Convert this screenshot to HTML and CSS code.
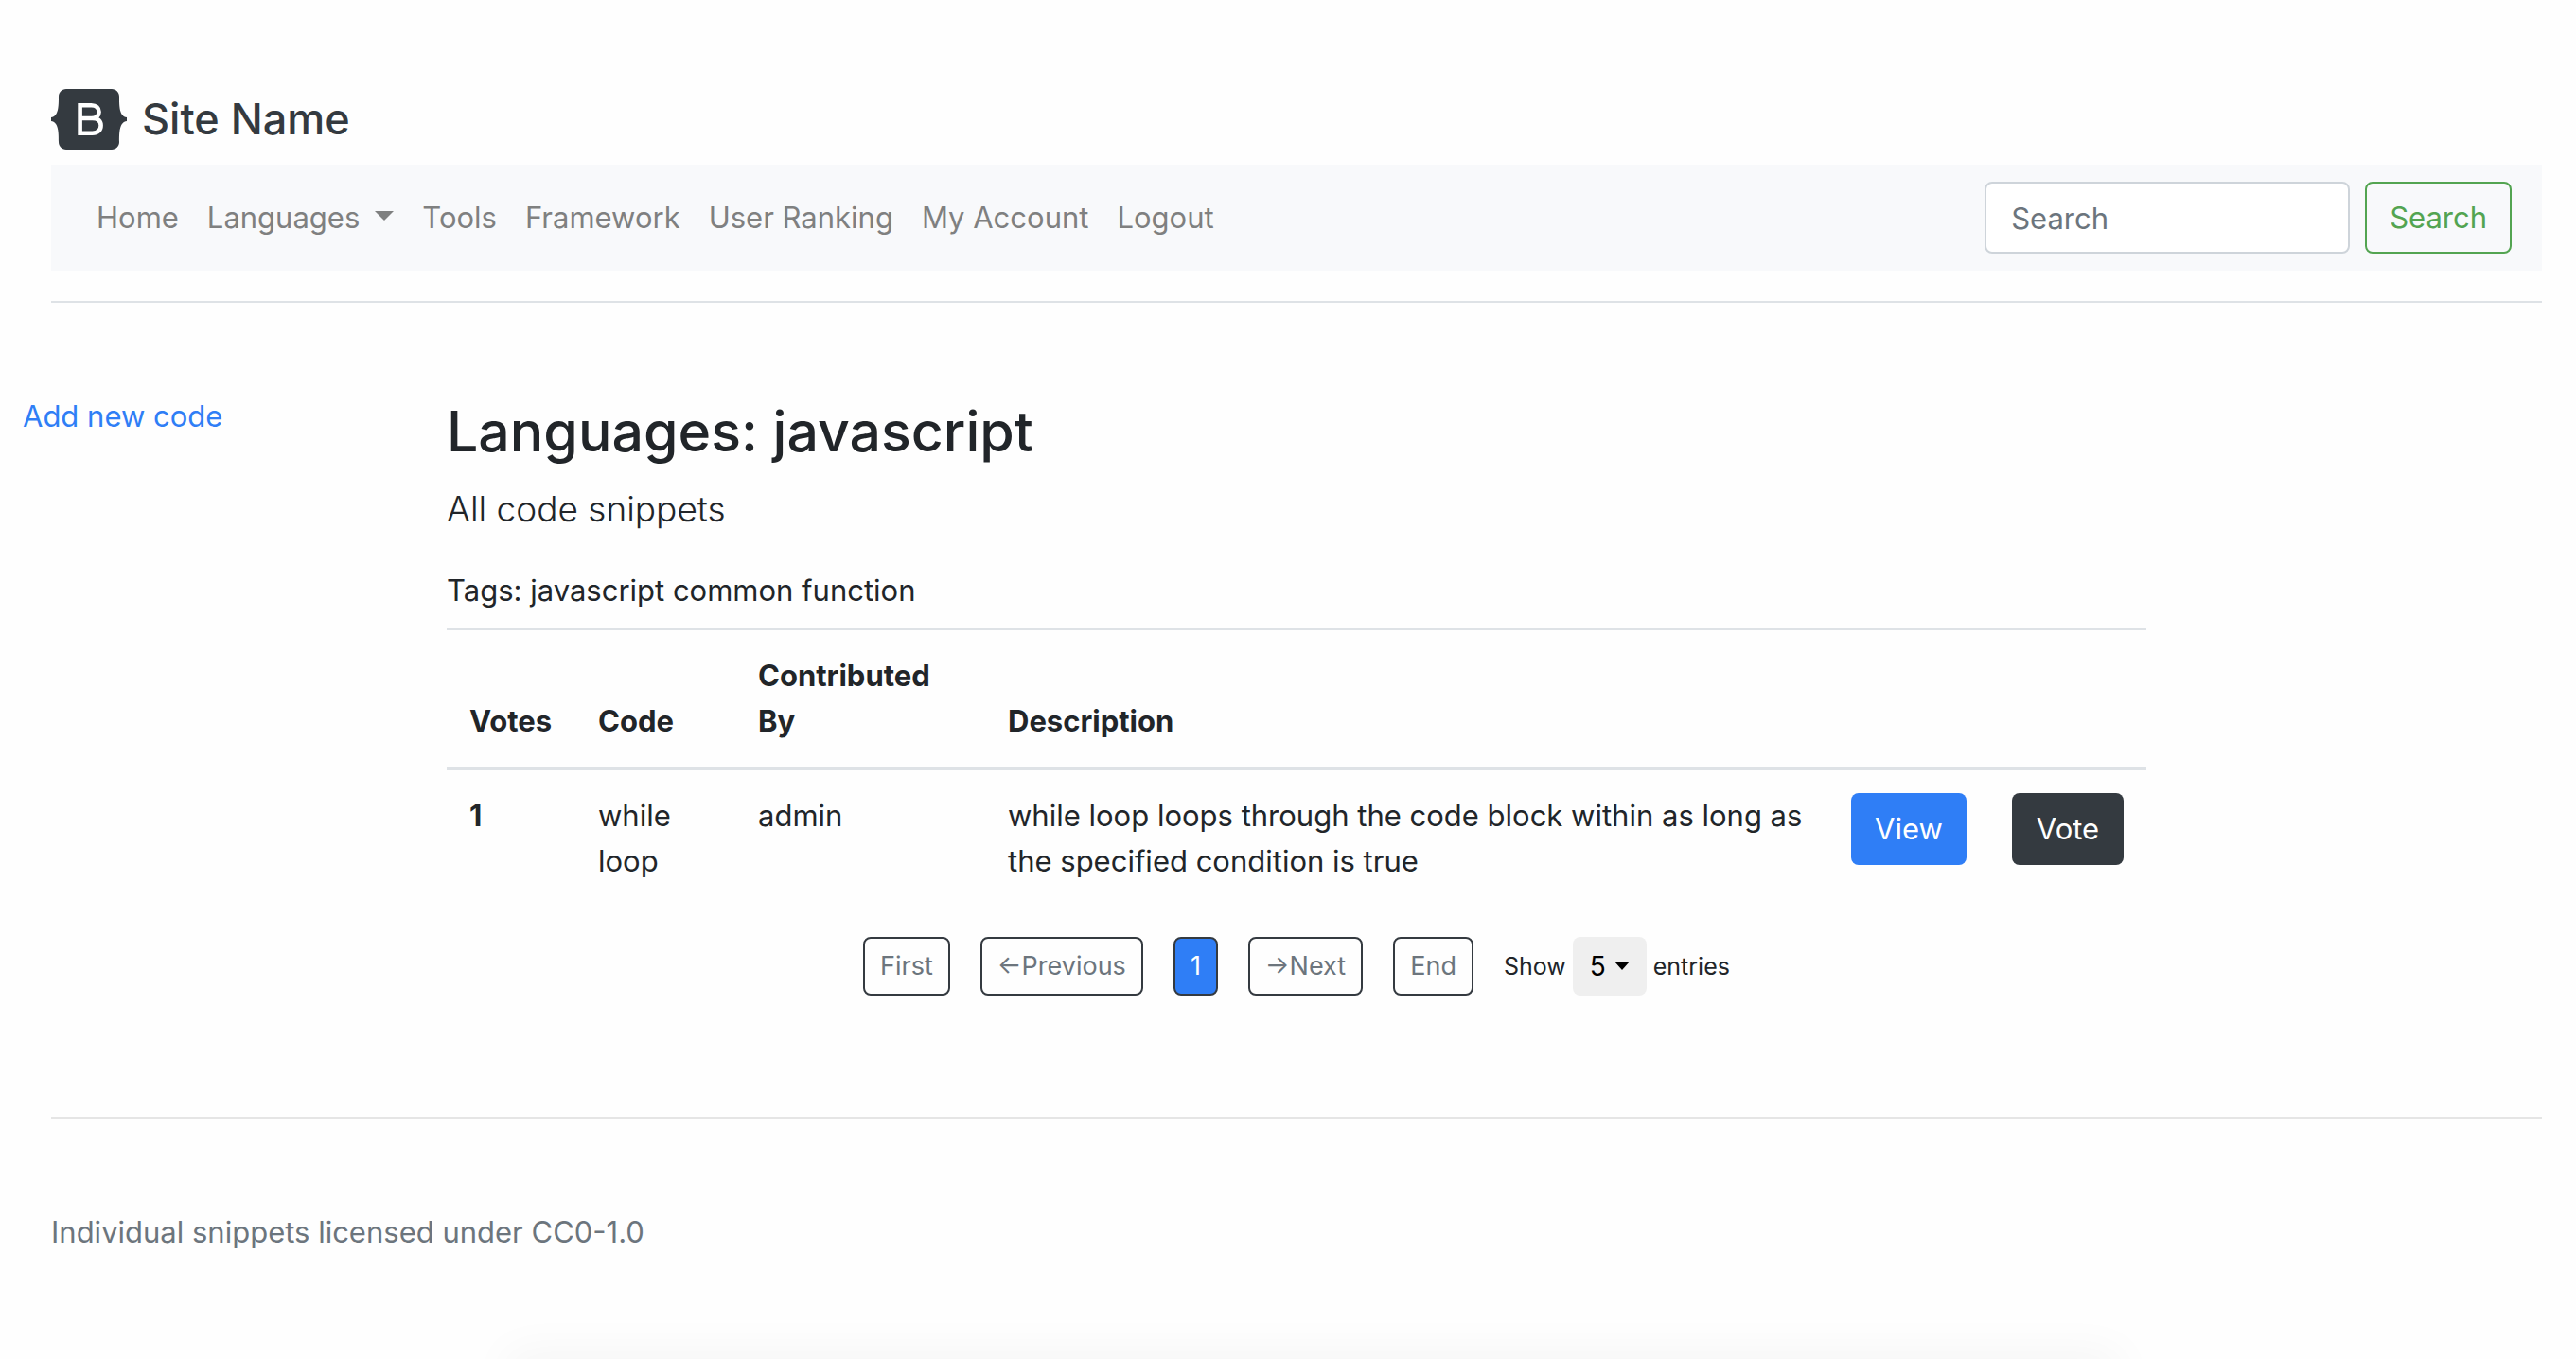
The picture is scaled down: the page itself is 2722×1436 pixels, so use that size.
FILE: index.html
```html
<!DOCTYPE html>
<html lang="en">
<head>
  <meta charset="utf-8">
  <meta name="viewport" content="width=device-width, initial-scale=1">
  <title>Languages: javascript</title>
  <link rel="stylesheet" href="styles.css">
</head>
<body>
  <header class="site-header">
    <a class="brand" href="#">
      <svg class="brand-logo" viewBox="0 0 80 64" aria-hidden="true">
        <path fill="currentColor" d="M16 0h48c5 0 8 4 8 8 0 10 0 21 8 22v4c-8 1-8 12-8 22 0 4-3 8-8 8H16c-5 0-8-4-8-8 0-10 0-21-8-22v-4c8-1 8-12 8-22 0-4 3-8 8-8z"/>
        <path fill="none" stroke="#fff" stroke-width="4.600" d="M30.600 17.300h12c5 0 8 3 8 7s-3 6.700-8 6.700h-12h13c6 0 9 3 9 7.600s-3 8.100-9 8.100h-13z"/>
      </svg>
      <span class="brand-name">Site Name</span>
    </a>
    <div class="navbar">
      <nav class="nav-links">
        <a href="#">Home</a>
        <a class="has-menu" href="#">Languages</a>
        <a href="#">Tools</a>
        <a href="#">Framework</a>
        <a href="#">User Ranking</a>
        <a href="#">My Account</a>
        <a href="#">Logout</a>
      </nav>
      <form class="search">
        <input class="search-input" type="search" placeholder="Search" aria-label="Search">
        <button class="btn btn-outline" type="submit">Search</button>
      </form>
    </div>
  </header>

  <div class="layout">
    <aside class="sidebar"><a href="#">Add new code</a></aside>
    <main class="content">
      <h1>Languages: javascript</h1>
      <p class="lead">All code snippets</p>
      <p class="tags">Tags: javascript common function</p>
      <table class="snippets">
        <thead>
          <tr>
            <th class="col-votes" scope="col">Votes</th>
            <th class="col-code" scope="col">Code</th>
            <th class="col-author" scope="col">Contributed By</th>
            <th scope="col">Description</th>
            <th class="col-view"></th>
            <th class="col-vote"></th>
          </tr>
        </thead>
        <tbody>
          <tr>
            <th scope="row">1</th>
            <td>while loop</td>
            <td>admin</td>
            <td>while loop loops through the code block within as long as the specified condition is true</td>
            <td><button class="btn btn-primary" type="button">View</button></td>
            <td><button class="btn btn-dark" type="button">Vote</button></td>
          </tr>
        </tbody>
      </table>
      <div class="pager">
        <button class="page" type="button">First</button>
        <button class="page" type="button">←Previous</button>
        <button class="page current" type="button" aria-current="page">1</button>
        <button class="page" type="button">→Next</button>
        <button class="page" type="button">End</button>
        <div class="page-size">
          <label for="page-size">Show</label>
          <span class="select-wrap">
            <select id="page-size">
              <option>5</option>
              <option>10</option>
            </select>
          </span>
          <span>entries</span>
        </div>
      </div>
    </main>
  </div>

  <footer class="site-footer">Individual snippets licensed under CC0-1.0</footer>
</body>
</html>
```

FILE: styles.css
```css
* {
  box-sizing: border-box;
}

body {
  position: relative;
  min-height: 100vh;
  margin: 0;
  overflow: hidden auto;
  background: #fefefe;
  color: #212529;
  font: 400 31px/48px Inter, "Liberation Sans", sans-serif;
}

/* soft shade along the lower edge of the window */
body::after {
  content: "";
  position: fixed;
  top: 100%;
  left: 20%;
  right: 18%;
  height: 40px;
  box-shadow: 0 0 48px 8px rgba(0, 0, 0, 0.04);
}

a {
  color: #2f7ef6;
  text-decoration: none;
}

button,
input,
select {
  font: inherit;
}

.site-header {
  margin: 0 36px 0 54px;
  padding: 78px 0 32px;
  border-bottom: 2px solid #dee2e6;
}

.brand {
  display: flex;
  align-items: center;
  gap: 16px;
  height: 96px;
  color: #343a40;
}

.brand-logo {
  width: 80px;
  height: 64px;
}

.brand-name {
  font-size: 45px;
  font-weight: 500;
}

.navbar {
  display: flex;
  align-items: center;
  justify-content: space-between;
  padding: 18px 32px 18px 48px;
  background: #f8f9fb;
}

.nav-links {
  display: flex;
  gap: 30px;
}

.nav-links a {
  color: #7f8080;
}

.has-menu::after {
  content: "";
  display: inline-block;
  margin-left: 16px;
  border: 10px solid transparent;
  border-top-color: currentColor;
  border-bottom: 0;
  vertical-align: 8px;
}

.search {
  display: flex;
  gap: 16px;
}

.search-input {
  width: 386px;
  height: 76px;
  padding: 0 26px;
  border: 2px solid #ced4da;
  border-radius: 8px;
  background: #fff;
}

.search-input::placeholder {
  color: #6c757d;
  opacity: 1;
}

.btn {
  height: 76px;
  padding: 0 24px;
  border: 2px solid transparent;
  border-radius: 8px;
}

.btn-outline {
  border-color: #53a451;
  background: transparent;
  color: #53a451;
}

.btn-primary {
  background: #2f7ef6;
  color: #fff;
}

.btn-dark {
  background: #343a40;
  color: #fff;
}

.layout {
  display: grid;
  grid-template-columns: 448px minmax(0, 1fr) 430px;
  padding-top: 96px;
}

.sidebar,
.content {
  padding: 0 24px;
}

h1 {
  margin: 0 0 12px;
  font-size: 59px;
  font-weight: 500;
  line-height: 80px;
}

.lead {
  margin: 0 0 32px;
  font-size: 37px;
  font-weight: 300;
  line-height: 60px;
}

.tags {
  margin: 0 0 16px;
}

.snippets {
  width: 100%;
  border-collapse: separate;
  border-spacing: 0;
  border-top: 2px solid #dee2e6;
  table-layout: fixed;
  text-align: left;
}

.snippets th,
.snippets td {
  padding: 24px;
  vertical-align: top;
}

.snippets th {
  font-weight: 700;
}

.snippets thead th {
  border-bottom: 4px solid #dee2e6;
  vertical-align: bottom;
}

.col-votes {
  width: 136px;
}

.col-code {
  width: 169px;
}

.col-author {
  width: 264px;
}

.col-view {
  width: 170px;
}

.col-vote {
  width: 166px;
}

.snippets .btn {
  display: block;
  width: 100%;
  padding: 0;
}

.pager {
  display: flex;
  justify-content: center;
  gap: 32px;
  padding-top: 32px;
  font-size: 27px;
}

.page {
  height: 62px;
  padding: 0 16px;
  border: 2px solid #343a40;
  border-radius: 8px;
  background: transparent;
  color: #6c757d;
}

.page.current {
  background: #2f7ef6;
  color: #fff;
}

.page-size {
  display: flex;
  align-items: center;
  gap: 7px;
  font-size: 25px;
}

.select-wrap {
  position: relative;
}

.select-wrap::after {
  content: "";
  position: absolute;
  top: 26px;
  right: 18px;
  border: 8px solid transparent;
  border-top: 9px solid #000;
  border-bottom: 0;
  pointer-events: none;
}

.page-size select {
  display: block;
  width: 78px;
  height: 62px;
  padding: 0 18px;
  border: 0;
  border-radius: 8px;
  background: #efefef;
  color: #000;
  font-size: 28px;
  appearance: none;
}

.site-footer {
  margin: 128px 36px 0 54px;
  padding: 96px 0;
  border-top: 2px solid #e5e5e5;
  color: #6c757d;
}
```
